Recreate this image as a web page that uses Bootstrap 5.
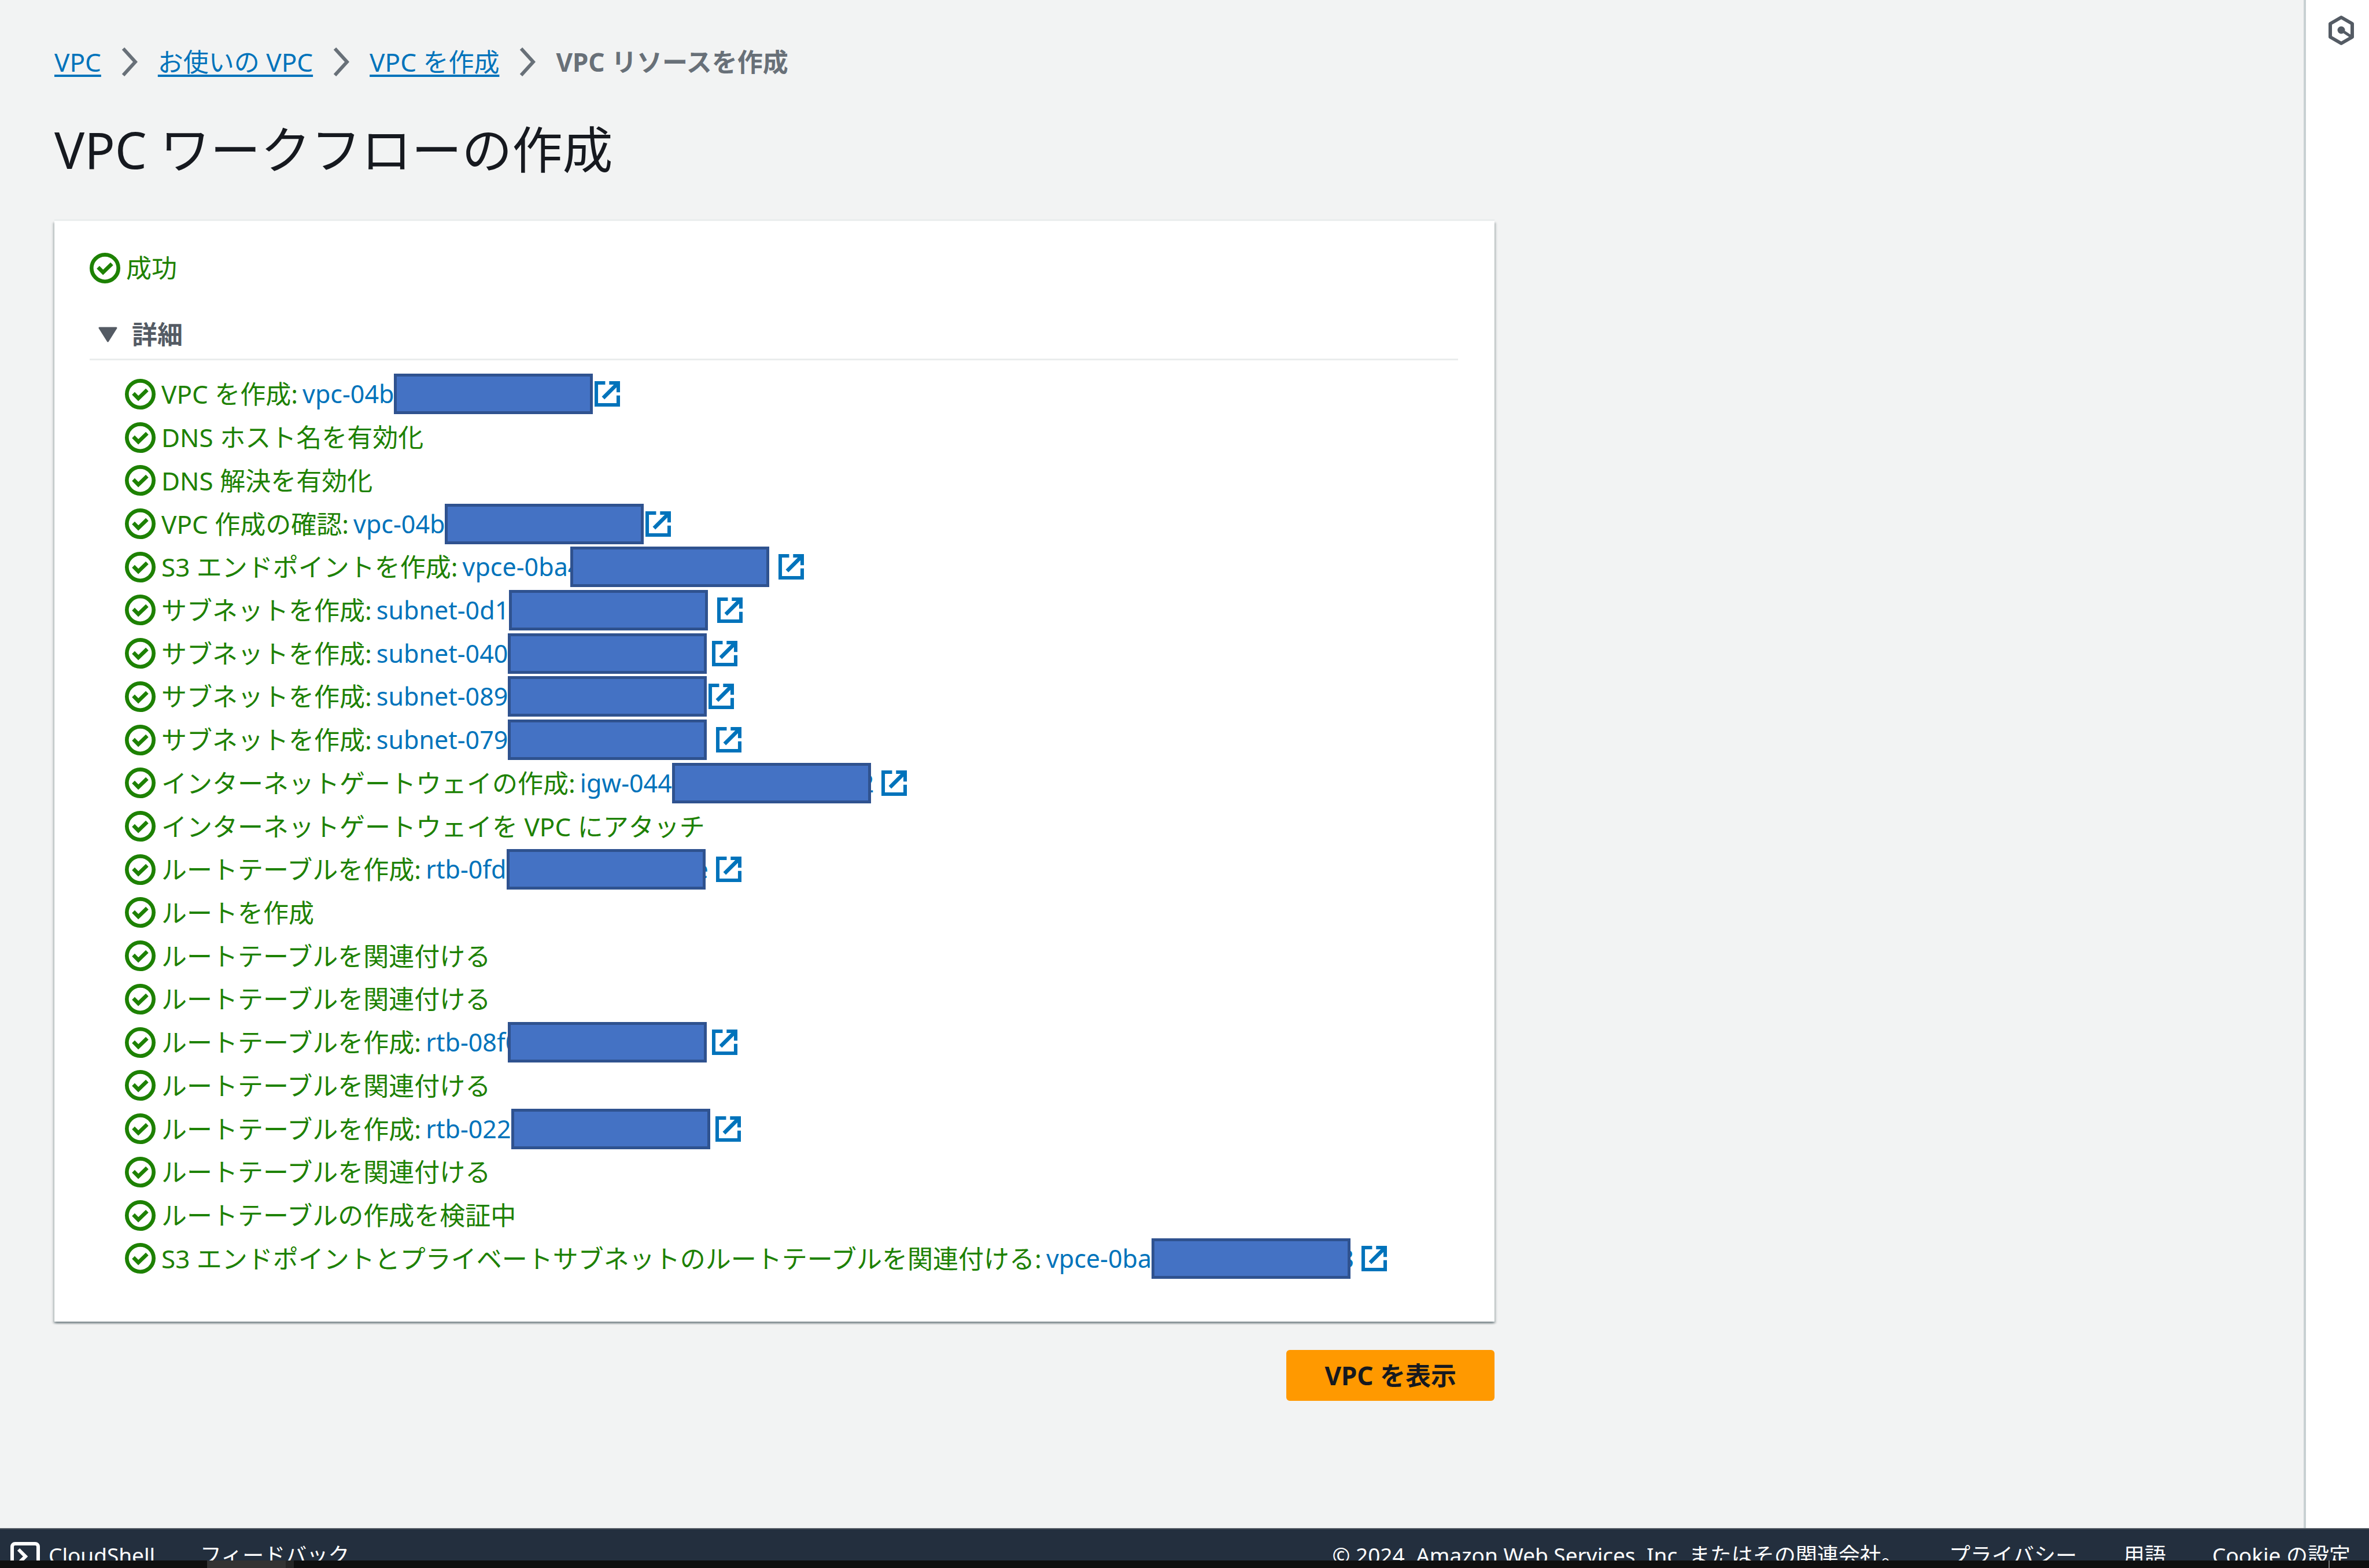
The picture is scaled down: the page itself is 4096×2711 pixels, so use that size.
<!DOCTYPE html>
<html lang="ja">
<head>
<meta charset="utf-8">
<meta name="viewport" content="width=device-width, initial-scale=1">
<title>VPC リソースを作成</title>
<link href="https://cdn.jsdelivr.net/npm/bootstrap@5.3.0/dist/css/bootstrap.min.css" rel="stylesheet">
<style>
  body { font-family: "Noto Sans", "Noto Sans CJK JP", sans-serif; font-size: 44px; line-height: 66px; color: #16191f; background: #f2f3f3; }
  a { color: #0073bb; }
  .page-body { padding: 74px 94px 0; }
  .trail { gap: 35px; color: #687078; }
  .trail a { text-decoration: underline; text-decoration-thickness: 4px; text-underline-offset: 5px; }
  .trail svg { width: 28px; height: 50px; }
  .page-title { font-size: 87px; line-height: 110px; font-weight: 400; margin: 63px 0 69px; }
  .flow-wrap { max-width: 2490px; }
  .flow-panel { padding: 48px 63px 72px 61px; background: #fff; box-shadow: 0 -3px 0 #eaeded, 0 3px 3px rgba(0,28,36,.3), 3px 3px 3px rgba(0,28,36,.15), -3px 3px 3px rgba(0,28,36,.15); }
  .ok { color: #1d8102; gap: 10px; }
  .ok-icon { width: 53px; height: 53px; flex: none; }
  .detail-box { margin-top: 49px; }
  .detail-box summary { list-style: none; gap: 25px; padding: 0 0 9px 15px; border-bottom: 3px solid #eaeded; color: #545b64; }
  .detail-box summary svg { width: 33px; height: 27px; }
  .steps { min-height: 1569px; margin: 21px 0 0; padding-left: 61px; }
  .steps li { flex: 1 1 0; }
  .steps a { font-size: 43px; text-decoration: none; margin-left: 8px; }
  .hide-id { width: 344px; height: 70px; flex: none; background: #4472c4; border: 5px solid #2f528f; z-index: 1; }
  .over-char { margin-left: -20px; }
  .steps .tail-char { margin-left: -19px; margin-right: 13px; }
  .ext-icon { width: 44px; height: 44px; flex: none; }
  .ext-near { margin-left: 3px; }
  .ext-mid { margin-left: 9px; }
  .ext-far { margin-left: 16px; }
  .btn-flow { --bs-btn-color: #16191f; --bs-btn-bg: #ff9900; --bs-btn-border-color: #ff9900; --bs-btn-hover-bg: #ec7211; --bs-btn-hover-border-color: #ec7211; font-size: 44px; line-height: 66px; font-weight: 700; padding: 8px 63px; border-width: 3px; border-radius: 6px; margin-top: 49px; }
  .side-rail { width: 113px; padding-top: 26px; padding-left: 12px; background: #fff; border-left: 4px solid #c8d0d2; }
  .side-rail button { line-height: 0; }
  .side-rail svg { width: 46px; height: 53px; }
  .foot-bar { height: 56px; background: #232f3e; border-top: 2px solid #545b64; font-size: 37px; line-height: 54px; padding: 18px 32px 0 16px; }
  .foot-bar a, .foot-bar button { color: #fff; text-decoration: none; font-size: 37px; line-height: 54px; }
  .foot-bar svg { width: 54px; height: 54px; }
  .foot-left { gap: 78px; }
  .foot-right { gap: 80px; }
  .foot-shell { gap: 14px; }
  .os-bar { height: 13px; background: #0f0f0f; padding-left: 358px; }
  .os-task { width: 136px; background: #333; }
  .os-next { width: 14px; background: #252525; }
  .os-edge { width: 2px; background: #777; margin-right: 68px; }
</style>
<script src="https://cdn.jsdelivr.net/npm/bootstrap@5.3.0/dist/js/bootstrap.bundle.min.js"></script>
</head>
<body class="d-flex flex-column min-vh-100">
<svg class="d-none" xmlns="http://www.w3.org/2000/svg">
  <symbol id="i-ok" viewBox="0 0 16 16"><circle cx="8" cy="8" r="7" fill="none" stroke="#1d8102" stroke-width="2"/><path d="M4.4 7.6 7 10.2 11.6 5.8" fill="none" stroke="#1d8102" stroke-width="2"/></symbol>
  <symbol id="i-ext" viewBox="0 0 16 16"><path d="M6.7 1H1v14h14V9M9.2 1H15v6M14.6 1.4 5.4 10.6" fill="none" stroke="#0073bb" stroke-width="2.4"/></symbol>
  <symbol id="i-next" viewBox="0 0 28 50"><path d="M3 2 24 25 3 48" fill="none" stroke="#687078" stroke-width="6"/></symbol>
</svg>

<div class="d-flex flex-fill">
  <main class="page-body flex-fill">
    <nav aria-label="breadcrumb">
      <ol class="trail list-unstyled d-flex align-items-center m-0">
        <li><a href="#">VPC</a></li>
        <li class="d-flex" aria-hidden="true"><svg><use href="#i-next"/></svg></li>
        <li><a href="#">お使いの VPC</a></li>
        <li class="d-flex" aria-hidden="true"><svg><use href="#i-next"/></svg></li>
        <li><a href="#">VPC を作成</a></li>
        <li class="d-flex" aria-hidden="true"><svg><use href="#i-next"/></svg></li>
        <li class="fw-bold" aria-current="page">VPC リソースを作成</li>
      </ol>
    </nav>
    <h1 class="page-title">VPC ワークフローの作成</h1>

    <div class="flow-wrap">
      <section class="flow-panel">
        <div class="ok d-flex align-items-center"><svg class="ok-icon"><use href="#i-ok"/></svg>成功</div>
        <details class="detail-box" open>
          <summary class="d-flex align-items-center fw-bold"><svg viewBox="0 0 33 27"><path d="M2 2H31L16.500 25Z" fill="#545b64" stroke="#545b64" stroke-width="3" stroke-linejoin="round"/></svg>詳細</summary>
          <ul class="steps list-unstyled d-flex flex-column">
            <li class="ok d-flex align-items-center"><svg class="ok-icon"><use href="#i-ok"/></svg><div class="d-flex align-items-center">VPC を作成: <a href="#">vpc-04b</a><span class="hide-id"></span><svg class="ext-icon ext-near"><use href="#i-ext"/></svg></div></li>
            <li class="ok d-flex align-items-center"><svg class="ok-icon"><use href="#i-ok"/></svg>DNS ホスト名を有効化</li>
            <li class="ok d-flex align-items-center"><svg class="ok-icon"><use href="#i-ok"/></svg>DNS 解決を有効化</li>
            <li class="ok d-flex align-items-center"><svg class="ok-icon"><use href="#i-ok"/></svg><div class="d-flex align-items-center">VPC 作成の確認: <a href="#">vpc-04b</a><span class="hide-id"></span><svg class="ext-icon ext-near"><use href="#i-ext"/></svg></div></li>
            <li class="ok d-flex align-items-center"><svg class="ok-icon"><use href="#i-ok"/></svg><div class="d-flex align-items-center">S3 エンドポイントを作成: <a href="#">vpce-0ba4</a><span class="hide-id over-char"></span><svg class="ext-icon ext-far"><use href="#i-ext"/></svg></div></li>
            <li class="ok d-flex align-items-center"><svg class="ok-icon"><use href="#i-ok"/></svg><div class="d-flex align-items-center">サブネットを作成: <a href="#">subnet-0d1</a><span class="hide-id"></span><svg class="ext-icon ext-far"><use href="#i-ext"/></svg></div></li>
            <li class="ok d-flex align-items-center"><svg class="ok-icon"><use href="#i-ok"/></svg><div class="d-flex align-items-center">サブネットを作成: <a href="#">subnet-040</a><span class="hide-id"></span><svg class="ext-icon ext-mid"><use href="#i-ext"/></svg></div></li>
            <li class="ok d-flex align-items-center"><svg class="ok-icon"><use href="#i-ok"/></svg><div class="d-flex align-items-center">サブネットを作成: <a href="#">subnet-089</a><span class="hide-id"></span><svg class="ext-icon ext-near"><use href="#i-ext"/></svg></div></li>
            <li class="ok d-flex align-items-center"><svg class="ok-icon"><use href="#i-ok"/></svg><div class="d-flex align-items-center">サブネットを作成: <a href="#">subnet-079</a><span class="hide-id"></span><svg class="ext-icon ext-far"><use href="#i-ext"/></svg></div></li>
            <li class="ok d-flex align-items-center"><svg class="ok-icon"><use href="#i-ok"/></svg><div class="d-flex align-items-center">インターネットゲートウェイの作成: <a href="#">igw-044</a><span class="hide-id"></span><a class="tail-char" href="#">2</a><svg class="ext-icon"><use href="#i-ext"/></svg></div></li>
            <li class="ok d-flex align-items-center"><svg class="ok-icon"><use href="#i-ok"/></svg>インターネットゲートウェイを VPC にアタッチ</li>
            <li class="ok d-flex align-items-center"><svg class="ok-icon"><use href="#i-ok"/></svg><div class="d-flex align-items-center">ルートテーブルを作成: <a href="#">rtb-0fd</a><span class="hide-id"></span><a class="tail-char" href="#">e</a><svg class="ext-icon"><use href="#i-ext"/></svg></div></li>
            <li class="ok d-flex align-items-center"><svg class="ok-icon"><use href="#i-ok"/></svg>ルートを作成</li>
            <li class="ok d-flex align-items-center"><svg class="ok-icon"><use href="#i-ok"/></svg>ルートテーブルを関連付ける</li>
            <li class="ok d-flex align-items-center"><svg class="ok-icon"><use href="#i-ok"/></svg>ルートテーブルを関連付ける</li>
            <li class="ok d-flex align-items-center"><svg class="ok-icon"><use href="#i-ok"/></svg><div class="d-flex align-items-center">ルートテーブルを作成: <a href="#">rtb-08f0</a><span class="hide-id over-char"></span><svg class="ext-icon ext-mid"><use href="#i-ext"/></svg></div></li>
            <li class="ok d-flex align-items-center"><svg class="ok-icon"><use href="#i-ok"/></svg>ルートテーブルを関連付ける</li>
            <li class="ok d-flex align-items-center"><svg class="ok-icon"><use href="#i-ok"/></svg><div class="d-flex align-items-center">ルートテーブルを作成: <a href="#">rtb-022</a><span class="hide-id"></span><svg class="ext-icon ext-mid"><use href="#i-ext"/></svg></div></li>
            <li class="ok d-flex align-items-center"><svg class="ok-icon"><use href="#i-ok"/></svg>ルートテーブルを関連付ける</li>
            <li class="ok d-flex align-items-center"><svg class="ok-icon"><use href="#i-ok"/></svg>ルートテーブルの作成を検証中</li>
            <li class="ok d-flex align-items-center"><svg class="ok-icon"><use href="#i-ok"/></svg><div class="d-flex align-items-center">S3 エンドポイントとプライベートサブネットのルートテーブルを関連付ける: <a href="#">vpce-0ba</a><span class="hide-id"></span><a class="tail-char" href="#">8</a><svg class="ext-icon"><use href="#i-ext"/></svg></div></li>
          </ul>
        </details>
      </section>
      <div class="d-flex justify-content-end"><button type="button" class="btn btn-flow">VPC を表示</button></div>
    </div>
  </main>
  <aside class="side-rail d-flex justify-content-center align-items-start">
    <button type="button" class="btn p-0 border-0" aria-label="ツール"><svg viewBox="0 0 46 53"><path d="M23 4 42 15V38L23 49 4 38V15Z" fill="none" stroke="#545b64" stroke-width="6" stroke-linejoin="round"/><circle cx="23" cy="26" r="6.500" fill="#545b64"/><path d="M23 26 41 38" stroke="#545b64" stroke-width="5"/></svg></button>
  </aside>
</div>

<footer class="foot-bar d-flex justify-content-between align-items-start overflow-hidden text-white">
  <div class="foot-left d-flex">
    <button type="button" class="foot-shell btn p-0 border-0 d-flex"><svg viewBox="0 0 54 54"><rect x="5" y="7" width="45" height="44" rx="5" fill="none" stroke="#fff" stroke-width="6"/><path d="M16 17 28 29 16 41" fill="none" stroke="#fff" stroke-width="6"/></svg>CloudShell</button>
    <a href="#">フィードバック</a>
  </div>
  <div class="foot-right d-flex">
    <span>© 2024, Amazon Web Services, Inc. またはその関連会社。</span>
    <a href="#">プライバシー</a>
    <a href="#">用語</a>
    <a href="#">Cookie の設定</a>
  </div>
</footer>
<div class="os-bar d-flex"><span class="os-task"></span><span class="os-next"></span><span class="os-edge ms-auto"></span></div>
</body>
</html>
